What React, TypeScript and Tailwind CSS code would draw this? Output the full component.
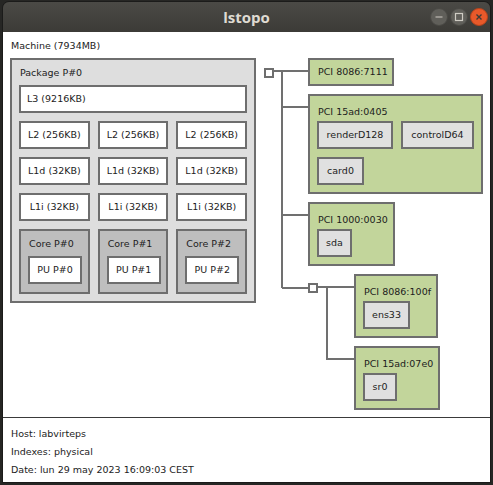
const line = "absolute bg-[#707070]";

function Box({
  label,
  className,
  center,
}: {
  label: string;
  className: string;
  center?: boolean;
}) {
  return (
    <div
      className={`flex h-[28px] shrink-0 items-center border-2 border-[#6e6e6e] ${
        center ? "justify-center" : "px-[6px]"
      } ${className}`}
    >
      {label}
    </div>
  );
}

function Core({ n }: { n: number }) {
  return (
    <div className="flex h-[65px] flex-col border-2 border-[#6e6e6e] bg-[#bebebe] px-[7px] pt-[7px]">
      <div className="h-[12px] pl-[1px] leading-[12px]">Core P#{n}</div>
      <div className="mt-[6px]">
        <Box label={`PU P#${n}`} className="w-[54px] bg-white" center />
      </div>
    </div>
  );
}

function Package() {
  const row = (label: string) => (
    <div className="grid grid-cols-3 gap-[8px]">
      {[0, 1, 2].map((i) => (
        <Box key={i} label={label} className="bg-white" center />
      ))}
    </div>
  );
  return (
    <div className="flex h-[245px] w-[246px] shrink-0 flex-col gap-[8px] border-2 border-[#6e6e6e] bg-[#dedede] px-[7px] pt-[7px]">
      <div className="-mb-[2px] h-[12px] pl-[1px] leading-[12px]">Package P#0</div>
      <Box label="L3 (9216KB)" className="bg-white" />
      {row("L2 (256KB)")}
      {row("L1d (32KB)")}
      {row("L1i (32KB)")}
      <div className="grid grid-cols-3 gap-[8px]">
        {[0, 1, 2].map((i) => (
          <Core key={i} n={i} />
        ))}
      </div>
    </div>
  );
}

function Pci({
  label,
  w,
  h,
  children,
  link = 26,
}: {
  label: string;
  w: number;
  h: number;
  children?: React.ReactNode;
  link?: number;
}) {
  return (
    <div className="relative shrink-0">
      <div className={line} style={{ left: -link, width: link, top: 12, height: 2 }} />
      <div
        className="flex flex-col border-2 border-[#6e6e6e] bg-[#c2d59b] px-[7px]"
        style={{ width: w, height: h }}
      >
        <div
          className={`flex ${
            children ? "h-[23px] items-end pb-[1px]" : "h-[24px] items-center"
          } pl-[1px] leading-[12px]`}
        >
          {label}
        </div>
        {children && <div className="mt-[2px] flex flex-wrap gap-[8px]">{children}</div>}
      </div>
    </div>
  );
}

function Dev({ label, w }: { label: string; w: number }) {
  return (
    <div
      className="flex h-[28px] items-center justify-center border-2 border-[#6e6e6e] bg-[#e0e0e0]"
      style={{ width: w }}
    >
      {label}
    </div>
  );
}

function Tree() {
  return (
    <div className="relative ml-[8px] flex flex-col gap-[8px] pl-[44px]">
      <div className="absolute left-0 top-[10px] h-[10px] w-[10px] border-2 border-[#6e6e6e] bg-white" />
      <div className={line} style={{ left: 17, top: 14, width: 2, height: 216 }} />
      <Pci label="PCI 8086:7111" w={86} h={28} link={35} />
      <Pci label="PCI 15ad:0405" w={175} h={100}>
        <Dev label="renderD128" w={76} />
        <Dev label="controlD64" w={73} />
        <Dev label="card0" w={47} />
      </Pci>
      <Pci label="PCI 1000:0030" w={87} h={64}>
        <Dev label="sda" w={35} />
      </Pci>
      <div className="relative flex">
        <div className={line} style={{ left: -26, top: 13, width: 26, height: 2 }} />
        <div className="relative w-[46px] shrink-0">
          <div className="absolute left-0 top-[9px] z-10 h-[10px] w-[10px] border-2 border-[#6e6e6e] bg-white" />
          <div className={line} style={{ left: 18, top: 13, width: 2, height: 73 }} />
        </div>
        <div className="flex flex-col gap-[8px]">
          <Pci label="PCI 8086:100f" w={84} h={64} link={36}>
            <Dev label="ens33" w={47} />
          </Pci>
          <Pci label="PCI 15ad:07e0" w={86} h={64} link={27}>
            <Dev label="sr0" w={34} />
          </Pci>
        </div>
      </div>
    </div>
  );
}

function WinButton({ kind }: { kind: "min" | "max" | "close" }) {
  const close = kind === "close";
  return (
    <div
      className={`flex h-[18px] w-[18px] items-center justify-center rounded-full border ${
        close ? "border-[#b5431c] bg-[#e8592a]" : "border-[#4a4945] bg-[#605f5a]"
      }`}
    >
      <svg width="10" height="10" viewBox="0 0 10 10">
        {kind === "min" && <path d="M1.5 5h7" stroke="#cfccc4" strokeWidth="1.2" />}
        {kind === "max" && (
          <rect x="1.5" y="1.5" width="7" height="7" fill="none" stroke="#cfccc4" strokeWidth="1.2" />
        )}
        {close && <path d="M2.5 2.5l5 5M7.5 2.5l-5 5" stroke="#3c3b37" strokeWidth="1.4" />}
      </svg>
    </div>
  );
}

export default function App() {
  return (
    <div className="h-[485px] w-[493px] whitespace-nowrap bg-[#262624] px-[2px] pt-[1px] font-['DejaVu_Sans',sans-serif] text-[9.5px] text-[#1c1c1c]">
      <div className="flex h-[482px] flex-col overflow-hidden rounded-t-[7px] border border-[#1b1b1a]">
        <div className="relative flex h-[30px] shrink-0 items-center justify-center bg-gradient-to-b from-[#4b4a46] to-[#3c3b37]">
          <span className="font-['Open_Sans',sans-serif] text-[15px] font-bold text-[#dfdbd2]">lstopo</span>
          <div className="absolute right-[2px] top-[6px] flex gap-[2px]">
            <WinButton kind="min" />
            <WinButton kind="max" />
            <WinButton kind="close" />
          </div>
        </div>
        <div className="flex flex-1 flex-col bg-white">
          <div className="h-[385px] pl-[7px] pt-[8px]">
            <div className="h-[12px] pl-[1px] leading-[12px]">Machine (7934MB)</div>
            <div className="mt-[6px] flex">
              <Package />
              <Tree />
            </div>
          </div>
          <div className="flex flex-col border-t border-[#3a3a3a] pl-[8px] pt-[7px] leading-[18px]">
            <div>Host: labvirteps</div>
            <div>Indexes: physical</div>
            <div>Date: lun 29 may 2023 16:09:03 CEST</div>
          </div>
        </div>
      </div>
    </div>
  );
}
